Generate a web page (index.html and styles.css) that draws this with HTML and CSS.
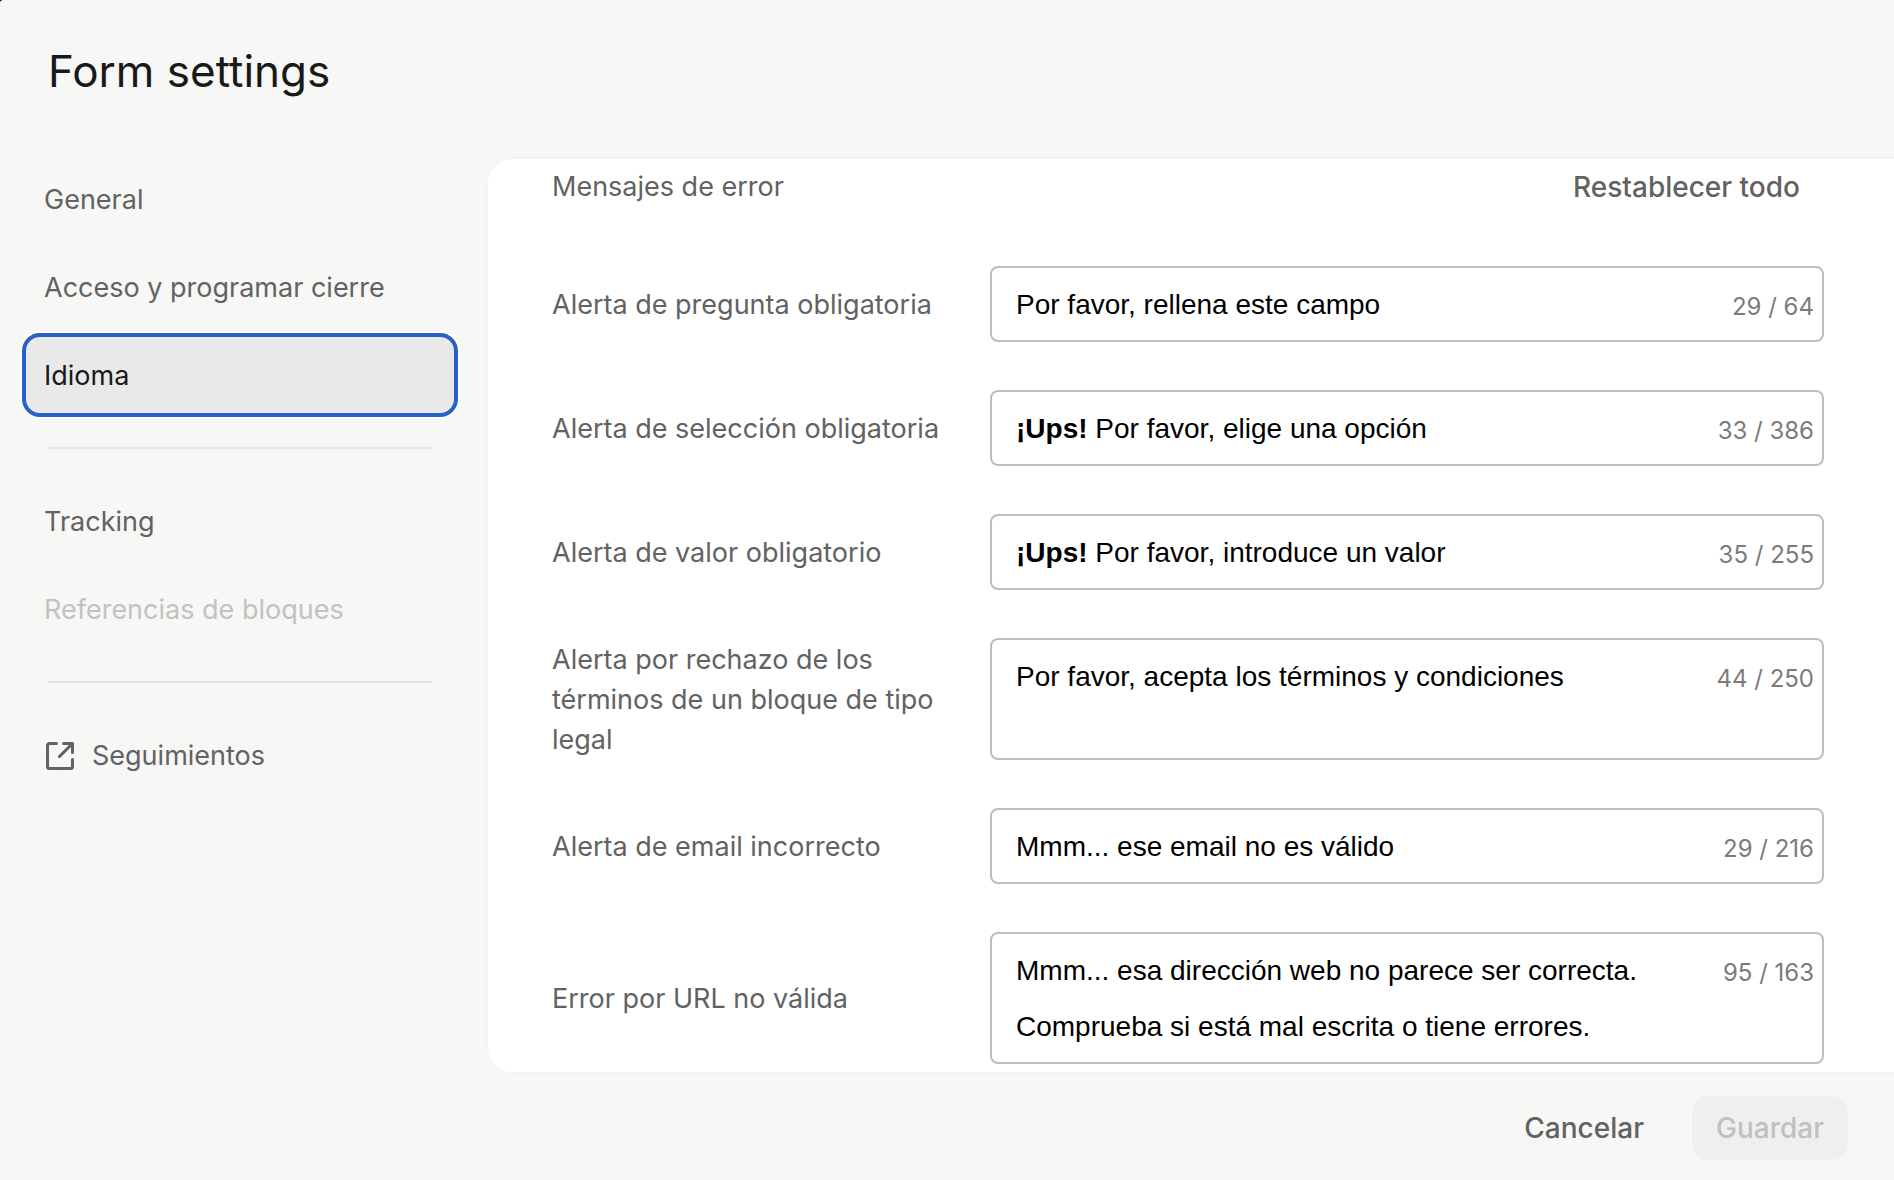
FILE: index.html
```html
<!DOCTYPE html>
<html lang="es">
<head>
<meta charset="utf-8">
<meta name="viewport" content="width=device-width, initial-scale=1">
<title>Form settings</title>
<link rel="stylesheet" href="styles.css">
</head>
<body>
<div class="settings">
  <header class="settings-header">
    <h1 class="title">Form settings</h1>
  </header>

  <div class="settings-main">
    <nav class="sidebar" aria-label="Form settings">
      <button class="nav-item" type="button">General</button>
      <button class="nav-item" type="button">Acceso y programar cierre</button>
      <button class="nav-item nav-item-active" type="button" aria-current="page">Idioma</button>
      <hr class="divider">
      <button class="nav-item" type="button">Tracking</button>
      <button class="nav-item" type="button" disabled>Referencias de bloques</button>
      <hr class="divider">
      <a class="nav-item nav-item-link" href="#seguimientos">
        <svg class="nav-icon" viewBox="0 0 28 28" fill="none" stroke="currentColor" stroke-width="3" stroke-linecap="round" stroke-linejoin="round" aria-hidden="true">
          <path d="M10.5 1.500H3.500A2 2 0 0 0 1.500 3.500V24.500A2 2 0 0 0 3.500 26.500H24.500A2 2 0 0 0 26.500 24.500V17.500"/>
          <path d="M17.500 1.500H26.500V10.500M26 2L13.500 14.500"/>
        </svg>
        Seguimientos
      </a>
    </nav>

    <main class="panel">
      <div class="section-header">
        <h2 class="section-title">Mensajes de error</h2>
        <button class="reset" type="button">Restablecer todo</button>
      </div>

      <div class="messages">
        <div class="message">
          <label class="label" for="required">Alerta de pregunta obligatoria</label>
          <div class="field">
            <textarea class="input" id="required" rows="1">Por favor, rellena este campo</textarea>
            <span class="counter">29 / 64</span>
          </div>
        </div>
        <div class="message">
          <span class="label" id="selection-label">Alerta de selección obligatoria</span>
          <div class="field">
            <div class="input" contenteditable="true" role="textbox" aria-labelledby="selection-label"><strong>¡Ups!</strong> Por favor, elige una opción</div>
            <span class="counter">33 / 386</span>
          </div>
        </div>
        <div class="message">
          <span class="label" id="value-label">Alerta de valor obligatorio</span>
          <div class="field">
            <div class="input" contenteditable="true" role="textbox" aria-labelledby="value-label"><strong>¡Ups!</strong> Por favor, introduce un valor</div>
            <span class="counter">35 / 255</span>
          </div>
        </div>
        <div class="message">
          <label class="label" for="legal">Alerta por rechazo de los términos de un bloque de tipo legal</label>
          <div class="field">
            <textarea class="input" id="legal" rows="1">Por favor, acepta los términos y condiciones</textarea>
            <span class="counter">44 / 250</span>
          </div>
        </div>
        <div class="message">
          <label class="label" for="email">Alerta de email incorrecto</label>
          <div class="field">
            <textarea class="input" id="email" rows="1">Mmm... ese email no es válido</textarea>
            <span class="counter">29 / 216</span>
          </div>
        </div>
        <div class="message">
          <label class="label" for="url">Error por URL no válida</label>
          <div class="field">
            <textarea class="input" id="url" rows="2">Mmm... esa dirección web no parece ser correcta. Comprueba si está mal escrita o tiene errores.</textarea>
            <span class="counter">95 / 163</span>
          </div>
        </div>
      </div>
    </main>
  </div>

  <footer class="settings-footer">
    <button class="button" type="button">Cancelar</button>
    <button class="button button-save" type="submit" disabled>Guardar</button>
  </footer>
</div>
</body>
</html>
```
FILE: styles.css
```css
*,
*::before,
*::after {
  box-sizing: border-box;
}

html {
  background: #000;
}

body {
  margin: 0;
  font-family: Inter, "Liberation Sans", sans-serif;
  font-size: 27px;
  line-height: 40px;
  color: #626262;
}

button,
textarea {
  margin: 0;
  border: 0;
  padding: 0;
  background: none;
  font: inherit;
  color: inherit;
}

.settings {
  display: flex;
  flex-direction: column;
  min-height: 100vh;
  border-top-left-radius: 3px;
  background: #f7f7f5;
}

.settings-header {
  padding: 39px 48px 56px;
}

.title {
  margin: 0;
  font-size: 44px;
  font-weight: 400;
  line-height: 64px;
  color: #191919;
}

.settings-main {
  display: grid;
  grid-template-columns: 436px minmax(0, 1fr);
  gap: 30px;
  flex: 1;
  padding-left: 22px;
}

/* Sidebar */

.sidebar {
  display: flex;
  flex-direction: column;
  gap: 4px;
  margin-top: -2px;
}

.nav-item {
  display: flex;
  align-items: center;
  gap: 18px;
  height: 84px;
  padding: 2px 22px 0;
  border-radius: 18px;
  text-align: left;
  text-decoration: none;
  color: inherit;
}

.nav-item:disabled {
  color: #c2c2c1;
}

.nav-item-active {
  border: 4px solid #2860c8;
  padding: 2px 18px 0;
  background: #e9e9e9;
  box-shadow: 0 0 0 2px #fff;
  color: #191919;
}

.nav-item-link {
  padding-left: 24px;
}

.nav-icon {
  flex: none;
  width: 28px;
  height: 28px;
}

.divider {
  width: 384px;
  height: 2px;
  margin: 26px;
  border: 0;
  background: #e5e5e3;
}

/* Panel */

.panel {
  padding: 8px 70px 7px 64px;
  border-radius: 24px 0 0 24px;
  background: #fff;
  box-shadow: 0 0 0 2px rgba(0, 0, 0, 0.01);
}

.section-header {
  display: flex;
  align-items: center;
  justify-content: space-between;
  margin-bottom: 59px;
}

.section-title {
  margin: 0;
  font-size: 27px;
  font-weight: 400;
}

.reset {
  padding: 0 24px;
  font-size: 28px;
  font-weight: 500;
}

.messages {
  display: flex;
  flex-direction: column;
  gap: 48px;
}

.message {
  display: grid;
  grid-template-columns: 390px minmax(0, 1fr);
  gap: 48px;
}

.label {
  align-self: center;
  padding-top: 2px;
}

.field {
  display: flex;
  align-items: flex-start;
  gap: 24px;
  padding: 9px 8px 7px 24px;
  border: 2px solid #bdbdbd;
  border-radius: 8px;
}

.input {
  flex: 1;
  min-width: 0;
  overflow: hidden;
  outline: 0;
  resize: none;
  font-family: "Liberation Sans", Arial, sans-serif;
  font-size: 28px;
  line-height: 56px;
  color: #000;
}

.counter {
  padding-top: 4px;
  font-size: 24px;
  line-height: 52px;
  color: #7b7b7b;
}

/* Footer */

.settings-footer {
  display: flex;
  justify-content: flex-end;
  gap: 24px;
  padding: 24px 46px 20px 24px;
}

.button {
  height: 64px;
  padding: 0 24px;
  border-radius: 16px;
  font-size: 28px;
  font-weight: 500;
}

.button-save {
  background: #efefee;
  color: #c0c0c0;
}
```
